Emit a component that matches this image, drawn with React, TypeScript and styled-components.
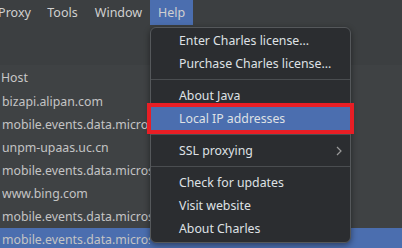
import React from "react";
import styled, { createGlobalStyle } from "styled-components";

const Global = createGlobalStyle`
  html, body { margin: 0; padding: 0; }
  body {
    background: #3c3f41;
    font-family: "Noto Sans", "Open Sans", sans-serif;
    font-size: 12.3px;
    overflow: hidden;
  }
`;

const Page = styled.div`
  position: relative;
  width: 402px;
  height: 248px;
  overflow: hidden;
  background: #3c3f41;
  color: #bbbbbb;
`;

const MenuBar = styled.div`
  display: flex;
  height: 25px;
  align-items: stretch;
  margin-left: -9px;
  font-size: 12.5px;
`;

const BarItem = styled.div<{ $active?: boolean; $w: number }>`
  display: flex;
  align-items: center;
  justify-content: center;
  width: ${(p) => p.$w}px;
  padding-bottom: 1px;
  box-sizing: border-box;
  color: #d0d0d0;
  background: ${(p) => (p.$active ? "#4b6eaf" : "transparent")};
`;

const Toolbar = styled.div`
  height: 40px;
`;

const Table = styled.div`
  display: flex;
  flex-direction: column;
  background: #3f4244;
`;

const HeaderRow = styled.div`
  height: 25px;
  display: flex;
  align-items: center;
  padding-left: 1px;
  color: #c8c8c8;
`;

const Row = styled.div<{ $selected?: boolean }>`
  height: 23px;
  display: flex;
  align-items: center;
  padding-left: 2px;
  color: #c4c4c4;
  background: ${(p) => (p.$selected ? "#4b6eaf" : "transparent")};
`;

const Cell = styled.span`
  max-width: 148px;
  overflow: hidden;
  white-space: nowrap;
`;

const Menu = styled.div`
  position: absolute;
  left: 150px;
  top: 27px;
  width: 199px;
  padding: 1px 0 2px;
  background: #2b2d30;
  border: 1px solid #55585b;
  border-radius: 6px;
  box-shadow: 0 2px 6px rgba(0, 0, 0, 0.45);
  display: flex;
  flex-direction: column;
`;

const Item = styled.div<{ $hl?: boolean }>`
  position: relative;
  height: 23px;
  display: flex;
  align-items: center;
  padding-left: 28px;
  padding-right: 8px;
  color: #dfe1e5;
  background: ${(p) => (p.$hl ? "#4b6eaf" : "transparent")};
  outline: ${(p) => (p.$hl ? "4px solid #e81e25" : "none")};
  z-index: ${(p) => (p.$hl ? 2 : 0)};
`;

const Sep = styled.div`
  height: 9px;
  display: flex;
  align-items: center;
  &::after {
    content: "";
    flex: 1;
    height: 1px;
    background: #4a4d50;
  }
`;

const Label = styled.span`
  flex: 1;
`;

const Chevron = styled.svg`
  width: 6px;
  height: 10px;
`;

const bar = [
  { label: "Proxy", w: 47 },
  { label: "Tools", w: 49 },
  { label: "Window", w: 63 },
  { label: "Help", w: 43, active: true },
];

const hosts = [
  "bizapi.alipan.com",
  "mobile.events.data.microsoft.com",
  "unpm-upaas.uc.cn",
  "mobile.events.data.microsoft.com",
  "www.bing.com",
  "mobile.events.data.microsoft.com",
  "mobile.events.data.microsoft.com",
];

export default function App() {
  return (
    <Page>
      <Global />
      <MenuBar>
        {bar.map((b) => (
          <BarItem key={b.label} $w={b.w} $active={b.active}>
            {b.label}
          </BarItem>
        ))}
      </MenuBar>
      <Toolbar />
      <Table>
        <HeaderRow>Host</HeaderRow>
        {hosts.map((h, i) => (
          <Row key={i} $selected={i === hosts.length - 1}>
            <Cell>{h}</Cell>
          </Row>
        ))}
      </Table>
      <Menu>
        <Item>
          <Label>Enter Charles license...</Label>
        </Item>
        <Item>
          <Label>Purchase Charles license...</Label>
        </Item>
        <Sep />
        <Item>
          <Label>About Java</Label>
        </Item>
        <Item $hl>
          <Label>Local IP addresses</Label>
        </Item>
        <Sep />
        <Item>
          <Label>SSL proxying</Label>
          <Chevron viewBox="0 0 6 10">
            <path d="M1 1 L5 5 L1 9" fill="none" stroke="#9a9a9a" strokeWidth="1.2" />
          </Chevron>
        </Item>
        <Sep />
        <Item>
          <Label>Check for updates</Label>
        </Item>
        <Item>
          <Label>Visit website</Label>
        </Item>
        <Item>
          <Label>About Charles</Label>
        </Item>
      </Menu>
    </Page>
  );
}
